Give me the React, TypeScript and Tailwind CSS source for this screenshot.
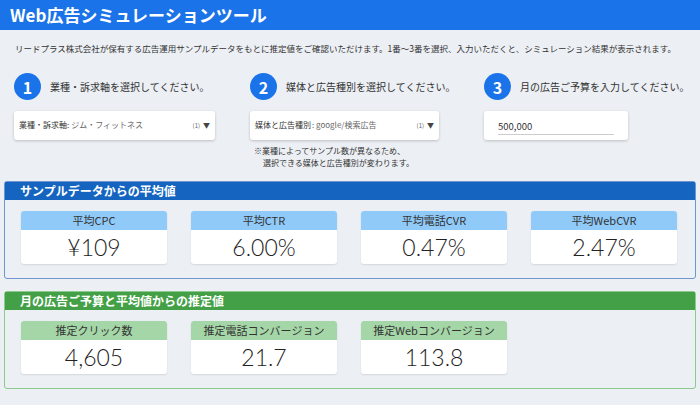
const font = { fontFamily: '"Noto Sans CJK JP", "Noto Sans", sans-serif' }
const num = { fontFamily: 'Lato, "Noto Sans", sans-serif' }

const avg = [
  { label: "平均CPC", value: "¥109" },
  { label: "平均CTR", value: "6.00%" },
  { label: "平均電話CVR", value: "0.47%" },
  { label: "平均WebCVR", value: "2.47%" },
]

const est = [
  { label: "推定クリック数", value: "4,605" },
  { label: "推定電話コンバージョン", value: "21.7" },
  { label: "推定Webコンバージョン", value: "113.8" },
]

function Step({ n, text }: { n: number; text: string }) {
  return (
    <div className="flex items-center gap-[9px] h-[28px] whitespace-nowrap">
      <div className="w-[27px] h-[27px] shrink-0 rounded-full bg-[#1a73e8] text-white flex items-center justify-center text-[16px] font-bold">{n}</div>
      <span className="text-[10px] text-[#333]">{text}</span>
    </div>
  )
}

function Stat({ label, value, band }: { label: string; value: string; band: string }) {
  return (
    <div className="w-[146px] bg-white rounded-[3px] shadow-[0_1px_2px_rgba(0,0,0,0.1)] overflow-hidden">
      <div className={`h-[19px] flex items-center justify-center text-[11px] text-[#333] ${band}`}>{label}</div>
      <div className="h-[34px] flex items-center justify-center text-[23px] font-light text-[#222]" style={num}>{value}</div>
    </div>
  )
}

export default function App() {
  return (
    <div className="w-[700px] h-[405px] bg-[#eceff3] overflow-hidden" style={font}>
      <div className="h-[30px] bg-[#1a73e8] flex items-center px-[10px]">
        <h1 className="text-white text-[17px] font-bold">Web広告シミュレーションツール</h1>
      </div>
      <p className="text-[8.5px] text-[#333] px-[15px] mt-[12px] whitespace-nowrap">
        リードプラス株式会社が保有する広告運用サンプルデータをもとに推定値をご確認いただけます。1番〜3番を選択、入力いただくと、シミュレーション結果が表示されます。
      </p>
      <div className="flex mt-[18px] px-[14px]">
        <div className="w-[236px] shrink-0">
          <Step n={1} text="業種・訴求軸を選択してください。" />
          <div className="mt-[10px] w-[201px] h-[29px] bg-white rounded-[3px] shadow-[0_1px_3px_rgba(0,0,0,0.2)] flex items-center px-[5px] text-[8px]">
            <span className="text-[#333]">業種・訴求軸:</span>
            <span className="text-[#666] ml-[2px]">ジム・フィットネス</span>
            <span className="ml-auto text-[#666] text-[6px]">(1)</span>
            <span className="ml-[3px] text-[7px] text-[#444]">▼</span>
          </div>
        </div>
        <div className="w-[234px] shrink-0">
          <Step n={2} text="媒体と広告種別を選択してください。" />
          <div className="mt-[10px] w-[189px] h-[29px] bg-white rounded-[3px] shadow-[0_1px_3px_rgba(0,0,0,0.2)] flex items-center px-[5px] text-[8px]">
            <span className="text-[#333]">媒体と広告種別</span>
            <span className="text-[#666] ml-[1px]">: google/検索広告</span>
            <span className="ml-auto text-[#666] text-[6px]">(1)</span>
            <span className="ml-[3px] text-[7px] text-[#444]">▼</span>
          </div>
          <p className="text-[8px] text-[#333] mt-[5px] ml-[4px] leading-[12px] whitespace-nowrap">
            ※業種によってサンプル数が異なるため、<br />
            <span className="ml-[9px]">選択できる媒体と広告種別が変わります。</span>
          </p>
        </div>
        <div className="shrink-0">
          <Step n={3} text="月の広告ご予算を入力してください。" />
          <div className="mt-[10px] w-[144px] h-[29px] bg-white rounded-[3px] shadow-[0_1px_3px_rgba(0,0,0,0.2)] flex items-end px-[14px] pb-[5px]">
            <div className="w-full border-b border-[#ccc] text-[9.5px] text-[#333] pb-[1px]">500,000</div>
          </div>
        </div>
      </div>

      <div className="mx-[4px] mt-[12px] border border-[#6f95cf] rounded-[3px] h-[98px]">
        <div className="h-[18px] bg-[#1565c0] text-white text-[12px] font-bold flex items-center px-[15px]">サンプルデータからの平均値</div>
        <div className="flex gap-[24px] px-[16px] mt-[11px]">
          {avg.map((a) => <Stat key={a.label} label={a.label} value={a.value} band="bg-[#90caf9]" />)}
        </div>
      </div>

      <div className="mx-[4px] mt-[12px] border border-[#8bc98d] rounded-[3px] h-[98px]">
        <div className="h-[18px] bg-[#43a047] text-white text-[12px] font-bold flex items-center px-[15px]">月の広告ご予算と平均値からの推定値</div>
        <div className="flex gap-[24px] px-[16px] mt-[11px]">
          {est.map((a) => <Stat key={a.label} label={a.label} value={a.value} band="bg-[#a5d6a7]" />)}
        </div>
      </div>
    </div>
  )
}
